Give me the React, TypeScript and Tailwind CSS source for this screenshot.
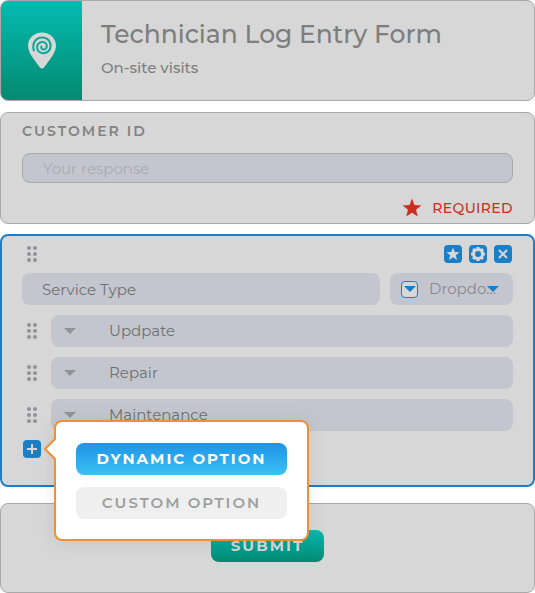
import React from "react";

const card = "rounded-lg border border-[#a9a9a9] bg-[#d7d7d7]";
const field = "rounded-lg bg-[#c3c6cf]";

function PinLogo() {
  return (
    <svg width="28" height="37" viewBox="0 0 28 37" fill="none" aria-hidden="true">
      <path d="M14 0.5C6.3 0.5 0 6.3 0 13.8C0 20.6 5.6 27 11.8 35.2C13 36.8 15 36.8 16.2 35.2C22.4 27 28 20.6 28 13.8C28 6.3 21.7 0.5 14 0.5Z" fill="#d7d7d7" />
      <path d="M5.8 18.5C3.8 11 8 5.4 14.2 5.4C19.6 5.4 23 9.6 22.6 14.4C22.2 18.8 18.8 21.5 15 21.2C11.5 20.9 9 18.4 9.1 15C9.2 12 11.8 9.8 14.7 10C17.4 10.2 19 12.1 18.8 14.4C18.6 16.5 16.9 17.6 15.2 17.4C13.7 17.2 12.9 16 13.3 14.4" stroke="#07a898" strokeWidth="2" strokeLinecap="round" />
    </svg>
  );
}

function Star({ size }: { size: number }) {
  return (
    <svg width={size} height={size} viewBox="0 0 20 20" fill="currentColor" aria-hidden="true">
      <path d="M10 0.6L12.5 7L19.4 7.4L14 11.8L15.8 18.6L10 14.8L4.2 18.6L6 11.8L0.6 7.4L7.5 7Z" />
    </svg>
  );
}

function Gear() {
  return (
    <svg width="16" height="16" viewBox="0 0 16 16" aria-hidden="true">
      <g fill="#d7d7d7">
        <circle cx="8" cy="8" r="6" />
        {[0, 45, 90, 135, 180, 225, 270, 315].map((a) => (
          <rect key={a} x="6.4" y="1" width="3.2" height="3" rx="0.6" transform={`rotate(${a} 8 8)`} />
        ))}
      </g>
      <circle cx="8" cy="8" r="3" fill="#1b7fc8" />
    </svg>
  );
}

function Cross() {
  return (
    <svg width="10" height="10" viewBox="0 0 10 10" stroke="currentColor" strokeWidth="2" aria-hidden="true">
      <path d="M1 1L9 9M9 1L1 9" />
    </svg>
  );
}

function Plus() {
  return (
    <svg width="10" height="10" viewBox="0 0 10 10" stroke="currentColor" strokeWidth="2" aria-hidden="true">
      <path d="M5 0V10M0 5H10" />
    </svg>
  );
}

function Caret() {
  return (
    <svg className="shrink-0" width="12" height="6" viewBox="0 0 12 6" fill="currentColor" aria-hidden="true">
      <path d="M0 0H12L6 6Z" />
    </svg>
  );
}

function Grip() {
  return (
    <svg width="10" height="16" viewBox="0 0 10 16" fill="#929397" aria-hidden="true">
      {[2, 8, 14].map((y) => (
        <g key={y}>
          <circle cx="2" cy={y} r="2" />
          <circle cx="8" cy={y} r="2" />
        </g>
      ))}
    </svg>
  );
}

function IconButton({ label, children }: { label: string; children: React.ReactNode }) {
  return (
    <button type="button" aria-label={label} className="flex size-[18px] items-center justify-center rounded bg-[#1b7fc8] text-[#d7d7d7]">
      {children}
    </button>
  );
}

function OptionRow({ value }: { value: string }) {
  return (
    <li className="flex items-center">
      <span className="w-[29px] pl-[5px]"><Grip /></span>
      <div className={`${field} flex h-8 min-w-0 flex-1 items-center pl-[13px] text-[#929397]`}>
        <Caret />
        <input aria-label={`Option ${value}`} defaultValue={value} className="ml-[33px] min-w-0 flex-1 bg-transparent text-[15px] text-[#707070] outline-none" />
      </div>
    </li>
  );
}

function AddOptionMenu() {
  return (
    <div className="absolute -top-5 left-[31px] z-10 w-[255px] rounded-lg border-2 border-[#f18f34] bg-white px-5 pt-[21px] pb-5 shadow-[0_2px_20px_rgba(0,0,0,0.08)]">
      <svg className="absolute top-[15px] -left-[13px]" width="13" height="24" viewBox="0 0 13 24" aria-hidden="true">
        <path d="M13 1L2 12L13 23" fill="white" stroke="#f18f34" strokeWidth="2" />
      </svg>
      <div className="flex flex-col gap-3">
        <button type="button" className="h-8 rounded-lg bg-linear-to-b from-[#1f93e6] to-[#3cc1f5] text-[15px] font-bold tracking-[2px] text-white">DYNAMIC OPTION</button>
        <button type="button" className="h-8 rounded-lg bg-[#efefef] text-[15px] font-semibold tracking-[2px] text-[#9e9e9e]">CUSTOM OPTION</button>
      </div>
    </div>
  );
}

export default function App() {
  return (
    <main className="flex flex-col font-['Montserrat','Inter',sans-serif]">
      <header className={`${card} flex h-[101px] overflow-hidden`}>
        <div className="flex w-[81px] shrink-0 items-center justify-center bg-linear-to-b from-[#04bbb0] to-[#048a72]">
          <PinLogo />
        </div>
        <div className="pt-[17px] pl-[19px] text-[#7e7e7e]">
          <h1 className="text-[25px] leading-8 font-medium">Technician Log Entry Form</h1>
          <p className="mt-2 text-[15px] leading-5 font-medium">On-site visits</p>
        </div>
      </header>

      <section className={`${card} mt-[11px] h-[112px] px-[21px] pt-2`}>
        <label htmlFor="customer-id" className="block text-[14px] leading-5 font-semibold tracking-[2px] text-[#828282]">CUSTOMER ID</label>
        <input id="customer-id" placeholder="Your response" className="mt-3 block h-[30px] w-full rounded-lg border border-[#a9a9a9] bg-[#c3c6cf] px-5 text-[15px] outline-none placeholder:text-[#a9abae]" />
        <p className="mt-[15px] flex items-center justify-end gap-[10px] text-[14px] leading-5 font-medium tracking-wide text-[#cb2f1f]">
          <Star size={20} />
          REQUIRED
        </p>
      </section>

      <section className="mt-[10px] h-[253px] rounded-lg border-2 border-[#1b7fc8] bg-[#d7d7d7] px-5 pt-[9px]">
        <div className="flex h-[18px] items-center justify-between pr-px pl-[5px]">
          <Grip />
          <div className="flex gap-[7px]">
            <IconButton label="Mark as required"><Star size={14} /></IconButton>
            <IconButton label="Settings"><Gear /></IconButton>
            <IconButton label="Remove"><Cross /></IconButton>
          </div>
        </div>
        <div className="mt-[10px] flex gap-[10px]">
          <input aria-label="Question" defaultValue="Service Type" className={`${field} h-8 min-w-0 flex-1 px-5 text-[15px] text-[#707070] outline-none`} />
          <div className={`${field} relative flex h-8 w-[123px] items-center pl-[11px] text-[#1b7fc8]`}>
            <span className="flex size-[17px] shrink-0 items-center justify-center rounded border border-[#1b7fc8] bg-[#d7d7d7]"><Caret /></span>
            <select aria-label="Field type" className="ml-[11px] w-[72px] appearance-none truncate bg-transparent text-[15px] text-[#8a8a8a] outline-none">
              <option>Dropdown</option>
            </select>
            <span className="pointer-events-none absolute right-[14px]"><Caret /></span>
          </div>
        </div>
        <ul className="mt-[10px] flex flex-col gap-[10px]">
          <OptionRow value="Updpate" />
          <OptionRow value="Repair" />
          <OptionRow value="Maintenance" />
        </ul>
        <div className="relative mt-[9px] ml-px w-[18px]">
          <IconButton label="Add option"><Plus /></IconButton>
          <AddOptionMenu />
        </div>
      </section>

      <footer className={`${card} mt-4 flex h-[90px] items-start justify-center pt-[26px]`}>
        <button type="button" className="h-8 w-[113px] rounded-lg bg-linear-to-b from-[#04bbb0] to-[#048a72] text-[15px] font-bold tracking-[2px] text-[#d7d7d7]">SUBMIT</button>
      </footer>
    </main>
  );
}
